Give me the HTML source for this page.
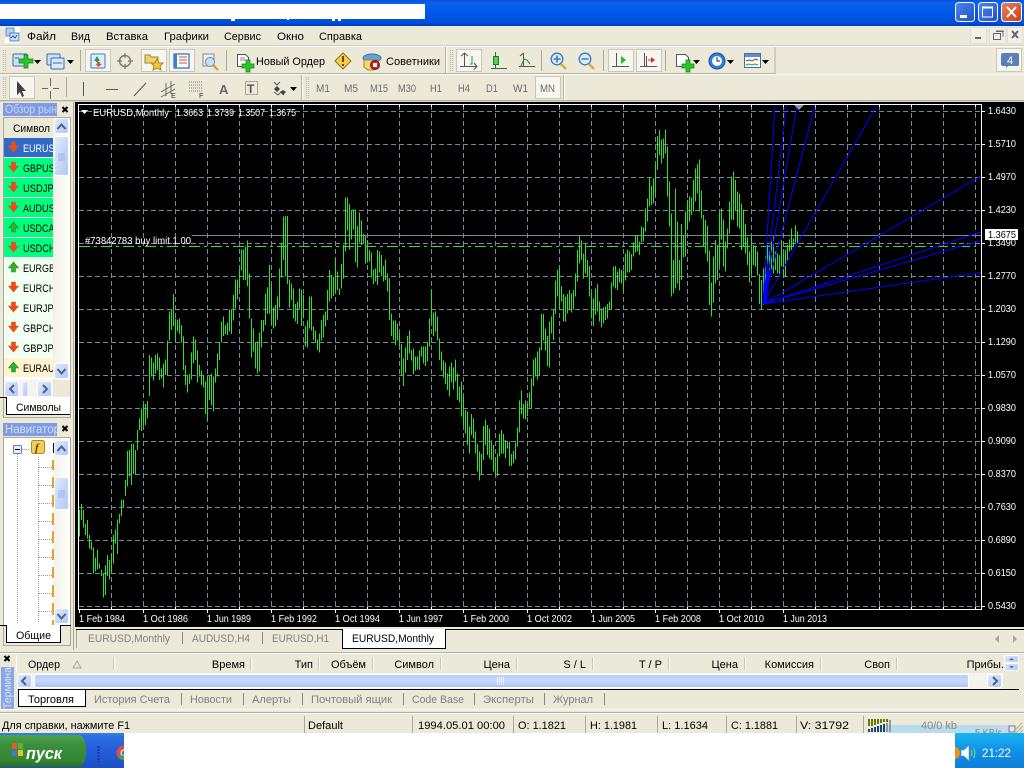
<!DOCTYPE html>
<html><head><meta charset="utf-8"><title>MT4</title>
<style>
html,body{margin:0;padding:0;background:#ece9d8;width:1024px;height:768px;overflow:hidden}
svg{display:block;position:absolute;left:0;top:0}
text{font-family:"Liberation Sans","DejaVu Sans",sans-serif;font-size:11px;fill:#000;white-space:pre}
.c text,text.c{font-size:10.5px;fill:#fff}
.g text,text.g{fill:#7f7f7f}
.tf{fill:#6c6c6c}
</style></head><body>
<svg width="1024" height="768" viewBox="0 0 1024 768" xmlns="http://www.w3.org/2000/svg">
<defs>
<linearGradient id="tb" x1="0" y1="0" x2="0" y2="1"><stop offset="0" stop-color="#0a54d8"/><stop offset=".12" stop-color="#0a62ee"/><stop offset=".5" stop-color="#0058e6"/><stop offset=".85" stop-color="#0050de"/><stop offset="1" stop-color="#003cb8"/></linearGradient>
<linearGradient id="wb" x1="0" y1="0" x2="1" y2="1"><stop offset="0" stop-color="#4f86ec"/><stop offset="1" stop-color="#1f4fc8"/></linearGradient>
<linearGradient id="wc" x1="0" y1="0" x2="1" y2="1"><stop offset="0" stop-color="#e8805e"/><stop offset="1" stop-color="#c8401c"/></linearGradient>
<linearGradient id="sb" x1="0" y1="0" x2="1" y2="1"><stop offset="0" stop-color="#e1eaff"/><stop offset="1" stop-color="#b0c6f8"/></linearGradient>
<linearGradient id="st" x1="0" y1="0" x2="1" y2="0"><stop offset="0" stop-color="#f3f2ea"/><stop offset="1" stop-color="#fefefb"/></linearGradient>
<linearGradient id="ht" x1="0" y1="0" x2="0" y2="1"><stop offset="0" stop-color="#b8cdfa"/><stop offset=".5" stop-color="#c8d8fd"/><stop offset="1" stop-color="#a9c1f6"/></linearGradient>
<linearGradient id="tk" x1="0" y1="0" x2="0" y2="1"><stop offset="0" stop-color="#3a80e8"/><stop offset=".1" stop-color="#2a6fe0"/><stop offset=".5" stop-color="#245edb"/><stop offset="1" stop-color="#1c50c4"/></linearGradient>
<linearGradient id="st2" x1="0" y1="0" x2="0" y2="1"><stop offset="0" stop-color="#4ea24e"/><stop offset=".3" stop-color="#3c8f3c"/><stop offset=".8" stop-color="#348534"/><stop offset="1" stop-color="#2a6c2a"/></linearGradient>
<linearGradient id="try" x1="0" y1="0" x2="0" y2="1"><stop offset="0" stop-color="#18b4f0"/><stop offset=".5" stop-color="#1290e9"/><stop offset="1" stop-color="#0f7fd8"/></linearGradient>
<g id="dn"><polygon points="-2,-5 2,-5 2,-1 5,-1 0,5 -5,-1 -2,-1" fill="#f04a18" stroke="#c85a30" stroke-width=".6"/></g>
<g id="up"><polygon points="-2,5 2,5 2,1 5,1 0,-5 -5,1 -2,1" fill="#30b030" stroke="#2a8a2a" stroke-width=".6"/></g>
<g id="sbtn"><rect x=".5" y=".5" width="14" height="15" rx="2" fill="url(#sb)" stroke="#fff"/></g>
<clipPath id="cl1"><rect x="0" y="118" width="53" height="262"/></clipPath>
<clipPath id="cl2"><rect x="0" y="437" width="54" height="188"/></clipPath>
</defs>

<!-- base -->
<rect width="1024" height="768" fill="#ece9d8"/>
<!-- title bar -->
<rect width="1024" height="26" fill="url(#tb)"/>
<rect x="0" y="4" width="425" height="15" fill="#fff"/>
<path d="M231 19h4v2h-4zM287 19h2v1h-2zM332 19h3v2h-3zM338 19h3v2h-3z" fill="#fff"/>
<g stroke="#fff">
<rect x="955.5" y="2.5" width="19" height="19" rx="3" fill="url(#wb)"/>
<rect x="978.5" y="2.5" width="19" height="19" rx="3" fill="url(#wb)"/>
<rect x="1001.5" y="2.5" width="20" height="19" rx="3" fill="url(#wc)"/>
</g>
<rect x="960" y="15" width="7" height="3" fill="#fff"/>
<rect x="982.5" y="7" width="10" height="10" fill="none" stroke="#fff"/><rect x="982" y="6.500" width="11" height="2" fill="#fff"/>
<path d="M1007 7l9 10M1016 7l-9 10" stroke="#fff" stroke-width="2" fill="none"/>

<!-- menu bar -->
<rect x="5" y="27" width="15" height="16" fill="#fff"/>
<rect x="6" y="28" width="8" height="8" fill="#b8d0f0" stroke="#3a70b8" stroke-width=".8"/><rect x="10" y="33" width="9" height="8" fill="#c8dcf8" stroke="#3a70b8" stroke-width=".8"/><path d="M11 38l2-2 2 2 2-3" stroke="#2a60a8" fill="none"/>
<g>
<text x="27" y="40" textLength="29" lengthAdjust="spacingAndGlyphs">Файл</text><text x="71" y="40" textLength="19" lengthAdjust="spacingAndGlyphs">Вид</text><text x="106" y="40" textLength="42" lengthAdjust="spacingAndGlyphs">Вставка</text><text x="164" y="40" textLength="45" lengthAdjust="spacingAndGlyphs">Графики</text><text x="224" y="40" textLength="37" lengthAdjust="spacingAndGlyphs">Сервис</text><text x="277" y="40" textLength="27" lengthAdjust="spacingAndGlyphs">Окно</text><text x="319" y="40" textLength="43" lengthAdjust="spacingAndGlyphs">Справка</text>
</g>
<rect y="45" width="1024" height="1" fill="#d0cebf"/><rect y="46" width="1024" height="1" fill="#fff"/>
<g fill="#f2f0e6" stroke="#e0ded0"><rect x="970.500" y="27.500" width="16" height="16"/><rect x="989.500" y="27.500" width="16" height="16"/><rect x="1007.500" y="27.500" width="15" height="16"/></g>
<rect x="975" y="37" width="6" height="2" fill="#666"/>
<path d="M993.500 33.500h7v6h-7zM996 31.500h7v5" fill="none" stroke="#666"/><path d="M993 33h8v1h-8zM996 30.500h8v1h-8z" fill="#666"/>
<path d="M1012 31l6 7M1018 31l-6 7" stroke="#666" stroke-width="2"/>

<!-- toolbars -->
<path d="M0 73.500H775M775 47V74" stroke="#b3b1a2" fill="none"/>
<path d="M0 74.500H1024" stroke="#fff"/>
<path d="M0 100.500H1024" stroke="#b3b1a2"/><path d="M0 101.500H1024" stroke="#d6d4c6"/>
<path d="M445.500 47V73M301.500 75V100M563.500 75V100" stroke="#b3b1a2"/>
<path d="M446.500 47V73M302.500 75V100M564.500 75V100" stroke="#fff"/>
<!-- grippers -->
<g stroke="#b9b7a8" stroke-dasharray="1 1"><path d="M3.500 50V71M5.500 50V71M3.500 77V98M5.500 77V98M450.500 50V71M452.500 50V71M306.500 77V98M308.500 77V98"/></g>
<!-- separators -->
<g stroke="#acaa9a"><path d="M80.500 50V71M226.500 50V71M541.500 50V71M603.500 50V71M665.500 50V71M66.500 77V97"/></g>
<!-- pressed -->
<g fill="#f6f5ef" stroke="#cac8b9">
<rect x="85.500" y="49.500" width="25" height="22"/><rect x="141.500" y="49.500" width="25" height="22"/><rect x="169.500" y="49.500" width="25" height="22"/><rect x="456.500" y="49.500" width="25" height="22"/><rect x="608.500" y="49.500" width="25" height="22"/><rect x="636.500" y="49.500" width="25" height="22"/><rect x="9.500" y="76.500" width="25" height="22"/><rect x="535.500" y="76.500" width="25" height="22"/>
</g>
<!-- row1 icons -->
<rect x="13" y="54" width="14" height="12" rx="1" fill="#cfe0f6" stroke="#3a6ca8"/><path d="M15 58h4M22 60h3" stroke="#3a6ca8"/>
<path d="M21 60h5v-4h4v4h5v4h-5v5h-4v-5h-5z" transform="translate(-2,-1) scale(1)" fill="#28c828" stroke="#1a7a1a" stroke-width=".7"/>
<path d="M34 60h7l-3.500 4z" fill="#000"/>
<rect x="47" y="54" width="13" height="11" rx="1" fill="#cfe0f6" stroke="#3a6ca8"/><rect x="51" y="58" width="13" height="11" rx="1" fill="#dbe8fa" stroke="#3a6ca8"/><path d="M53 63h9" stroke="#3a6ca8"/>
<path d="M67 60h7l-3.500 4z" fill="#000"/>
<rect x="91" y="54" width="14" height="14" rx="1" fill="#e4eefc" stroke="#3a78c0"/><path d="M94 61l3-5 3 5h-2v1h-2v-1z" fill="#18a848"/><path d="M97 62h3v2h2l-3.500 3-3-3h1.500z" fill="#e84a20"/>
<circle cx="125" cy="61" r="5.500" fill="none" stroke="#777" stroke-width="1.400"/><path d="M125 53v5M125 64v5M117 61h5M128 61h5" stroke="#777" stroke-width="1.200"/>
<path d="M145 55h5l1 2h7v6h-13z" fill="#f0d070" stroke="#a08830"/><polygon points="157,59 159,63 163,63 160,66 161,70 157,68 153,70 154,66 151,63 155,63" fill="#f4c838" stroke="#a88820"/>
<rect x="174" y="54" width="15" height="14" fill="#fff" stroke="#2a6cb8" stroke-width="1.200"/><rect x="174" y="54" width="3" height="14" fill="#3a80d0"/><path d="M179 57h8M179 60h8M179 63h8" stroke="#c05040"/>
<rect x="203" y="54" width="11" height="12" fill="#eaf0f8" stroke="#889"/><circle cx="210" cy="62" r="4.500" fill="#c8def2" stroke="#6a8aa8"/><path d="M213 65l5 5" stroke="#c8a030" stroke-width="2"/>
<path d="M237.500 54.500h8l3 3v9h-11z" fill="#fff" stroke="#555"/><path d="M240 58h5M240 60h6" stroke="#888"/>
<path d="M242 64h4v-4h4v4h4v4h-4v4h-4v-4h-4z" fill="#28c828" stroke="#1a7a1a" stroke-width=".7"/>
<text x="256" y="65" textLength="69" lengthAdjust="spacingAndGlyphs">Новый Ордер</text>
<polygon points="343,53 351,61 343,69 335,61" fill="#f4d040" stroke="#8a7430"/><rect x="342" y="56" width="2" height="6" fill="#804000"/><rect x="342" y="64" width="2" height="2" fill="#804000"/>
<ellipse cx="372" cy="58" rx="9" ry="4" fill="#68a0d8" stroke="#3a70a8"/><path d="M364 60h14v7l-5 3h-5l-4-3z" fill="#f4d870" stroke="#a08830"/><circle cx="375" cy="65" r="4.500" fill="#d02020" stroke="#801010"/><rect x="373" y="63" width="4" height="4" fill="#fff"/>
<text x="386" y="65" textLength="54" lengthAdjust="spacingAndGlyphs">Советники</text>
<!-- chart type icons -->
<g fill="none" stroke="#555">
<path d="M464.500 53V67M460 66.500H477M461 56l3.500-3 3.500 3M474 63l3 3.500-3 3"/>
<path d="M495.500 52V68M491 68.500H507" /><rect x="493.500" y="56.500" width="5" height="8" fill="#50d050" stroke="#208020"/>
<path d="M523.500 53V67M519 66.500H535M520 56l3.500-3"/></g>
<path d="M472 56v8h-2" stroke="#20a020" fill="none"/>
<path d="M521 66l3-7 3 1 3 4" stroke="#209020" fill="none"/>
<g fill="#d8ecfa" stroke="#3a78b8" stroke-width="1.300"><circle cx="557" cy="59" r="5.800"/><circle cx="585" cy="59" r="5.800"/></g>
<path d="M561 64l5 5M589 64l5 5" stroke="#d0b040" stroke-width="2.400"/>
<path d="M553.500 59h7M557 55.500v7M581.500 59h7" stroke="#3a78b8" stroke-width="1.600"/>
<g fill="none" stroke="#555"><path d="M616.500 53V67M612 66.500H629M644.500 53V67M640 66.500H657M646.500 56V66"/></g>
<polygon points="621,56 626,60 621,64" fill="#20c020"/><polygon points="655,60 651,57 651,63" fill="#d83020"/><path d="M652 60h-4" stroke="#d83020"/>
<path d="M676.500 54.500h9l3 3v9h-12z" fill="#fff" stroke="#555"/><path d="M682 64h4v-4h4v4h4v4h-4v4h-4v-4h-4z" fill="#28c828" stroke="#1a7a1a" stroke-width=".7"/><path d="M693 60h7l-3.500 4z" fill="#000"/>
<circle cx="717" cy="61" r="8" fill="#2a80e0" stroke="#1a50a0"/><circle cx="717" cy="61" r="5" fill="#fff"/><path d="M717 57v4h3" stroke="#222" fill="none"/><path d="M727 60h7l-3.500 4z" fill="#000"/>
<rect x="744.500" y="53.500" width="16" height="14" fill="#fff" stroke="#3a70b0"/><rect x="745" y="54" width="15" height="3" fill="#5a90d0"/><path d="M746 61l3-1 3 1 3-2 3 1" stroke="#a83020" fill="none"/><path d="M746 65l3-1 3 1 3-1 3 1" stroke="#20a040" fill="none"/><path d="M762 60h7l-3.500 4z" fill="#000"/>
<!-- "4" button -->
<rect x="996.500" y="48.500" width="25" height="23" fill="#f6f5ef" stroke="#cac8b9"/>
<path d="M1003 53h14a2 2 0 0 1 2 2v9a2 2 0 0 1-2 2h-9l-2 2v-2h-3a2 2 0 0 1-2-2v-9a2 2 0 0 1 2-2z" fill="#5d7fb8"/>
<text x="1007" y="64" style="fill:#fff;font-size:11px">4</text>
<!-- row2 icons -->
<path d="M17 81l0 14 3-3 2 5 2-1-2-5 4 0z" fill="#404040"/>
<path d="M50.500 79V87M50.500 92V100M42 89.500H48M53 89.500H59" stroke="#666" transform="translate(0,-1)"/>
<path d="M83.500 82V96" stroke="#555"/><path d="M106 89.500H118" stroke="#555"/><path d="M134 96L146 83" stroke="#555"/>
<path d="M161 92l14-8M161 97l14-8M166 83v13M171 81v13" stroke="#666" fill="none"/><text x="171" y="98" style="font-size:7px;font-weight:bold;fill:#666">E</text>
<path d="M189 82h14M189 85h14M189 88h14M189 91h14" stroke="#777" stroke-dasharray="1 1"/><text x="199" y="98" style="font-size:7px;font-weight:bold;fill:#666">F</text>
<text x="219" y="94" style="font-size:13px;font-weight:bold;fill:#666">A</text>
<rect x="245.500" y="81.500" width="12" height="13" fill="none" stroke="#666" stroke-dasharray="1 1"/><text x="247" y="93" style="font-size:12px;font-weight:bold;fill:#555">T</text>
<path d="M274 82l3 3 3-3M274 92l4 3 3-3 3 3" stroke="#555" fill="none"/><polygon points="277,86 280,89 277,92 274,89" fill="#444"/><polygon points="283,90 286,92 283,95 280,92" fill="#444"/><path d="M290 87h7l-3.500 4z" fill="#000"/>
<g class="tf"><text class="tf" x="316" y="92" textLength="14" lengthAdjust="spacingAndGlyphs">M1</text><text class="tf" x="344" y="92" textLength="14" lengthAdjust="spacingAndGlyphs">M5</text><text class="tf" x="370" y="92" textLength="18" lengthAdjust="spacingAndGlyphs">M15</text><text class="tf" x="398" y="92" textLength="18" lengthAdjust="spacingAndGlyphs">M30</text><text class="tf" x="430" y="92" textLength="12" lengthAdjust="spacingAndGlyphs">H1</text><text class="tf" x="458" y="92" textLength="12" lengthAdjust="spacingAndGlyphs">H4</text><text class="tf" x="486" y="92" textLength="12" lengthAdjust="spacingAndGlyphs">D1</text><text class="tf" x="513" y="92" textLength="15" lengthAdjust="spacingAndGlyphs">W1</text><text class="tf" x="540" y="92" textLength="15" lengthAdjust="spacingAndGlyphs">MN</text></g>

<!-- LEFT PANELS -->
<path d="M73.500 102V650" stroke="#aca899"/>
<rect x="3" y="103" width="54" height="13" fill="#7d9ce2"/>
<text x="5" y="113" style="fill:#c8d6f8;font-size:12px" textLength="52" lengthAdjust="spacingAndGlyphs">Обзор рын</text>
<path d="M62.500 107l5 5M67.500 107l-5 5" stroke="#000" stroke-width="2"/>
<rect x="3.500" y="117.500" width="67" height="280" fill="#fff" stroke="#aca899"/>
<rect x="4" y="118" width="49" height="20" fill="#ece9d8"/>
<text x="13" y="132" textLength="37" lengthAdjust="spacingAndGlyphs">Символ</text>
<g clip-path="url(#cl1)">
<rect x="4" y="138" width="49" height="19" fill="#316ac5"/>
<rect x="4" y="158" width="49" height="19" fill="#00ff7f"/><rect x="4" y="178" width="49" height="19" fill="#00ff7f"/><rect x="4" y="198" width="49" height="19" fill="#00ff7f"/><rect x="4" y="218" width="49" height="19" fill="#00ff7f"/><rect x="4" y="238" width="49" height="19" fill="#00ff7f"/>
<rect x="4" y="258" width="49" height="19" fill="#f0fff0"/><rect x="4" y="278" width="49" height="19" fill="#f0fff0"/><rect x="4" y="298" width="49" height="19" fill="#f0fff0"/><rect x="4" y="318" width="49" height="19" fill="#f0fff0"/><rect x="4" y="338" width="49" height="19" fill="#f0fff0"/>
<rect x="4" y="358" width="49" height="19" fill="#fff4cf"/>
<text x="23" y="152" style="fill:#fff" textLength="38" lengthAdjust="spacingAndGlyphs">EURUSD</text>
<text x="23" y="172" textLength="38" lengthAdjust="spacingAndGlyphs">GBPUSD</text><text x="23" y="192" textLength="37" lengthAdjust="spacingAndGlyphs">USDJPY</text><text x="23" y="212" textLength="38" lengthAdjust="spacingAndGlyphs">AUDUSD</text><text x="23" y="232" textLength="38" lengthAdjust="spacingAndGlyphs">USDCAD</text><text x="23" y="252" textLength="38" lengthAdjust="spacingAndGlyphs">USDCHF</text><text x="23" y="272" textLength="38" lengthAdjust="spacingAndGlyphs">EURGBP</text><text x="23" y="292" textLength="38" lengthAdjust="spacingAndGlyphs">EURCHF</text><text x="23" y="312" textLength="37" lengthAdjust="spacingAndGlyphs">EURJPY</text><text x="23" y="332" textLength="38" lengthAdjust="spacingAndGlyphs">GBPCHF</text><text x="23" y="352" textLength="37" lengthAdjust="spacingAndGlyphs">GBPJPY</text><text x="23" y="372" textLength="38" lengthAdjust="spacingAndGlyphs">EURAUD</text>
</g>
<use href="#dn" x="13.500" y="147"/><use href="#dn" x="13.500" y="167"/><use href="#dn" x="13.500" y="187"/><use href="#dn" x="13.500" y="207"/><use href="#up" x="13.500" y="227"/><use href="#dn" x="13.500" y="247"/><use href="#up" x="13.500" y="267"/><use href="#dn" x="13.500" y="287"/><use href="#dn" x="13.500" y="307"/><use href="#dn" x="13.500" y="327"/><use href="#dn" x="13.500" y="347"/><use href="#up" x="13.500" y="367"/>
<!-- scrollbar MW -->
<rect x="53" y="118" width="17" height="262" fill="url(#st)"/>
<use href="#sbtn" x="54" y="118"/><use href="#sbtn" x="54" y="363"/>
<rect x="54.500" y="136.500" width="14" height="39" rx="2" fill="url(#sb)" stroke="#fff"/>
<path d="M58 156h7M58 158h7M58 160h7M58 154h7" stroke="#9cb2e0"/>
<path d="M57.500 129l4-4.500 4 4.500M57.500 369l4 4.500 4-4.500" fill="none" stroke="#4d6185" stroke-width="2"/>
<!-- h scroll MW -->
<rect x="4" y="380" width="66" height="17" fill="#f4f3ec"/>
<rect x="4.500" y="381.500" width="14" height="15" rx="2" fill="url(#sb)" stroke="#fff"/><rect x="22" y="381.500" width="6" height="15" rx="2" fill="url(#sb)" stroke="#fff"/><rect x="37.500" y="381.500" width="14" height="15" rx="2" fill="url(#sb)" stroke="#fff"/>
<path d="M14 385l-4 4 4 4M43 385l4 4-4 4" fill="none" stroke="#4d6185" stroke-width="2"/>
<rect x="53" y="380" width="17" height="17" fill="#ece9d8"/>
<path d="M0 397.500H6" stroke="#000"/>
<rect x="6" y="397" width="64" height="17" fill="#fff"/>
<path d="M6.500 397V414.500H70" fill="none" stroke="#000" stroke-width="1"/>
<text x="16" y="411" textLength="45" lengthAdjust="spacingAndGlyphs">Символы</text>
<path d="M3.500 398V417.500H70.500V398" fill="none" stroke="#aca899"/>

<!-- navigator -->
<rect x="3" y="423" width="54" height="13" fill="#7d9ce2"/>
<text x="5" y="433" style="fill:#d4dff9;font-size:12px" textLength="55" lengthAdjust="spacingAndGlyphs">Навигатор</text>
<rect x="57" y="423" width="16" height="13" fill="#ece9d8"/>
<path d="M62.500 426l5 5M67.500 426l-5 5" stroke="#000" stroke-width="2"/>
<rect x="3.500" y="437.500" width="67" height="188" fill="#fff" stroke="#aca899"/>
<g stroke="#999" stroke-dasharray="1 1" fill="none">
<path d="M17.500 454V624M38.500 457V622M20 449.500H30"/>
<path d="M39 467.500H52M39 485.500H52M39 503.500H52M39 521.500H52M39 539.500H52M39 557.500H52M39 575.500H52M39 593.500H52M39 611.500H52"/>
</g>
<rect x="13.500" y="445.500" width="8" height="8" rx="1" fill="#e8ecf8" stroke="#6a80a0"/><path d="M15 449.500h5" stroke="#000"/>
<rect x="31.500" y="440.500" width="13" height="13" rx="2" fill="#f4cc58" stroke="#b08820"/><text x="35" y="451" style="font-family:'Liberation Serif',serif;font-style:italic;font-weight:bold;font-size:11px;fill:#604010">f</text>
<rect x="53" y="443" width="1" height="10" fill="#000"/>
<g fill="#e0a428"><rect x="52" y="460" width="2" height="10"/><rect x="52" y="477" width="2" height="11"/><rect x="52" y="495" width="2" height="12"/><rect x="52" y="513" width="2" height="12"/><rect x="52" y="531" width="2" height="12"/><rect x="52" y="549" width="2" height="11"/><rect x="52" y="567" width="2" height="11"/><rect x="52" y="585" width="2" height="12"/><rect x="52" y="603" width="2" height="12"/><rect x="52" y="620" width="2" height="5"/></g>
<rect x="54" y="438" width="16" height="187" fill="url(#st)"/>
<rect x="54.500" y="440.500" width="14" height="15" rx="2" fill="url(#sb)" stroke="#fff"/><rect x="54.500" y="477.500" width="14" height="32" rx="2" fill="url(#sb)" stroke="#fff"/><rect x="54.500" y="608.500" width="14" height="15" rx="2" fill="url(#sb)" stroke="#fff"/>
<path d="M58 491h7M58 493h7M58 495h7M58 497h7" stroke="#9cb2e0"/>
<path d="M57.500 451l4-4.500 4 4.500M57.500 614l4 4.500 4-4.500" fill="none" stroke="#4d6185" stroke-width="2"/>
<rect x="6" y="625" width="55" height="17" fill="#fff"/>
<path d="M6.500 625V642.500H60.500V625" fill="none" stroke="#000"/>
<path d="M0 625.500H6M61 625.500H71" stroke="#000"/>
<text x="16" y="639" textLength="35" lengthAdjust="spacingAndGlyphs">Общие</text>
<path d="M3.500 626V645.500H70.500V626" fill="none" stroke="#aca899"/>

<!-- CHART -->
<rect x="75" y="102" width="949" height="525" fill="#000"/>
<path d="M78.500 104.500H981.500V609.500H78.500z" fill="none" stroke="#fff"/>
<!-- grid -->
<g stroke="#778899" stroke-dasharray="5 3" fill="none">
<path d="M79 111.500H981M79 144.500H981M79 177.500H981M79 210.500H981M79 243.500H981M79 276.500H981M79 309.500H981M79 342.500H981M79 375.500H981M79 408.500H981M79 441.500H981M79 474.500H981M79 507.500H981M79 540.500H981M79 573.500H981M79 606.500H981"/>
<path d="M111.500 105V609M143.500 105V609M175.500 105V609M207.500 105V609M239.500 105V609M271.500 105V609M303.500 105V609M335.500 105V609M367.500 105V609M399.500 105V609M431.500 105V609M463.500 105V609M495.500 105V609M527.500 105V609M559.500 105V609M591.500 105V609M623.500 105V609M655.500 105V609M687.500 105V609M719.500 105V609M751.500 105V609M783.500 105V609M815.500 105V609M847.500 105V609M879.500 105V609M911.500 105V609M943.500 105V609M975.500 105V609"/>
</g>
<!-- axis ticks -->
<g stroke="#fff">
<path d="M79.500 610V613M143.500 610V613M207.500 610V613M271.500 610V613M335.500 610V613M399.500 610V613M463.500 610V613M527.500 610V613M591.500 610V613M655.500 610V613M719.500 610V613M783.500 610V613"/>
<path d="M111.500 607V609M175.500 607V609M239.500 607V609M303.500 607V609M367.500 607V609M431.500 607V609M495.500 607V609M559.500 607V609M623.500 607V609M687.500 607V609M751.500 607V609M815.500 607V609M847.500 607V609M879.500 607V609M911.500 607V609M943.500 607V609M975.500 607V609"/>
<path d="M111.500 105V107M143.500 105V107M175.500 105V107M207.500 105V107M239.500 105V107M271.500 105V107M303.500 105V107M335.500 105V107M367.500 105V107M399.500 105V107M431.500 105V107M463.500 105V107M495.500 105V107M527.500 105V107M559.500 105V107M591.500 105V107M623.500 105V107M655.500 105V107M687.500 105V107M719.500 105V107M751.500 105V107M783.500 105V107M815.500 105V107M847.500 105V107M879.500 105V107M911.500 105V107M943.500 105V107M975.500 105V107"/>
<path d="M982 111.500h3M982 144.500h3M982 177.500h3M982 210.500h3M982 243.500h3M982 276.500h3M982 309.500h3M982 342.500h3M982 375.500h3M982 408.500h3M982 441.500h3M982 474.500h3M982 507.500h3M982 540.500h3M982 573.500h3M982 606.500h3"/>
</g>
<!-- lines -->
<path d="M192 235.500H981" stroke="#778899"/>
<path d="M79 246.500H976" stroke="#2fe02f" stroke-dasharray="11 4 3 4"/>
<!-- bars -->
<g stroke="#2fe02f" stroke-width="3" fill="none" shape-rendering="crispEdges">
<path transform="translate(78.170,420) scale(.33333)" d="M4 270V350M10 252V300M16 270V322M22 312V345M28 300V355M34 345V385M40 365V390M46 382V460M52 412V455M58 388V448M64 430V445M70 450V468M76 460V532M82 435V525M88 405V468M94 420V478M100 402V460M106 345V430M112 328V370M118 298V402M124 282V310M130 240V288M136 238V262M142 180V228M148 93V200M154 90V170M160 72V195M166 72V162M172 90V162M178 30V90"/>
<path transform="translate(78.170,200) scale(.33333)" d="M184 655V690M190 625V693M196 612V675M202 612V675M208 603V655M214 465V588M220 472V530M226 488V542M232 465V520M238 460V510M244 472V540M250 505V535M256 490V562M262 478V525M268 422V525M274 335V422M280 328V390M286 282V378M292 355V425M298 358V395M304 355V402M310 375V428M316 410V510M322 495V555M328 525V578M334 522V552M340 458V538M346 410V490M352 418V480M358 452V548M364 495V530M370 512V555M376 525V562M382 545V642M388 528V660M394 528V600M400 520V615M406 530V635M412 505V548M418 460V530M424 428V480M430 365V428M436 350V408M442 375V402M448 368V405M454 328V395M460 328V402M466 285V362M472 238V325M478 238V298M484 208V265M490 148V212M496 148V240M502 140V240M508 122V258M514 220V355M520 355V472M526 385V455M532 428V505M538 425V520M544 398V515M550 360V442M556 360V395M562 280V375M568 262V342M574 195V340M580 252V372M586 322V385M592 315V380M598 290V358M604 205V322M610 130V232M616 50V180M622 48V230M628 48V252M634 238V322M640 250V300M646 265V355M652 312V365M658 305V372M664 265V325M670 268V378M676 285V355M682 378V440M688 362V442M694 290V385M700 290V392M706 380V420M712 392V428M718 418V450M724 400V458M730 360V422M736 345V412M742 335V380M748 270V360M754 210V305M760 225V295M766 230V288M772 175V278M778 215V270M784 265V285"/>
<path transform="translate(340.170,190) scale(.33333)" d="M4 222V296M10 165V265M16 22V185M22 22V122M28 42V178M34 62V148M40 58V118M46 58V218M52 108V232M58 68V158M64 92V165M70 132V160M76 135V220M82 150V218M88 180V215M94 188V262M100 238V282M106 235V275M112 180V285M118 185V248M124 195V258M130 228V275M136 208V270M142 250V305M148 265V390M154 370V438M160 392V450M166 392V465M172 400V452M178 428V470M184 462V555M190 505V588M196 472V548M202 438V510M208 422V490M214 480V512M220 475V552M226 500V542M232 500V538M238 482V540M244 470V500M250 470V520M256 470V528M262 458V515M268 385V470M274 300V398M280 368V438M286 365V425M292 380V452M298 445V510M304 485V542M310 512V562M316 518V582M322 550V600M328 530V620M334 518V578M340 532V598M346 508V575M352 550V630M358 590V638M364 575V680M370 618V705M376 660V730M382 665V765M388 710V790M394 672V735M400 685V745M406 725V790M412 762V845M418 785V872M424 792V855M430 708V810M436 688V765M442 705V795M448 715V805M454 752V810M460 765V845M466 805V855M472 790V858M478 732V800M484 720V792M490 732V790M496 750V805M502 755V775M508 755V828M514 792V828M520 783V820M526 758V808M532 712V770M538 632V728M544 602V672M550 642V685M556 632V688M562 640V678M568 608V652M574 565V655M580 508V588M586 502V560M592 485V568M598 472V558M604 372V480M610 372V452M616 415V482M622 438V528M628 395V532M634 380V430M640 360V450M646 272V372M652 240V320M658 232V358M664 288V335M670 312V395M676 320V395M682 312V370M688 300V360M694 310V368M700 300V358"/>
<path transform="translate(560.170,120) scale(.33333)" d="M46 460V530M52 390V485M58 348V430M64 362V420M70 400V475M76 372V460M82 420V470M88 438V530M94 520V595M100 535V618M106 505V585M112 492V575M118 545V605M124 565V622M130 562V610M136 560V600M142 552V595M148 545V570M154 487V568M160 440V500M166 438V505M172 455V510M178 445V488M184 450V490M190 452V518M196 400V482M202 388V458M208 395V458M214 402V450M220 368V410M226 345V398M232 345V395M238 365V405M244 320V368M250 322V365M256 265V335M262 235V305M268 172V260M274 198V255M280 175V250M286 132V225M292 48V150M298 30V105M304 58V130M310 55V115M316 28V100M322 80V230M328 185V320M334 280V530M340 420V520M346 205V505M352 305V490M358 420V512M364 312V480M370 345V412M376 275V410M382 240V330M388 230V305M394 232V285M400 180V275M406 145V245M412 132V220M418 118V275M424 212V295M430 285V380M436 300V400M442 318V425M448 392V555M454 488V590M460 410V548M466 360V490M472 375V480M478 275V440M484 265V358M490 298V440M496 365V455M502 325V385M508 245V340M514 170V298M520 155V300M526 180V270M532 215V320M538 220V325M544 250V390M550 268V380M556 312V400M562 352V435M568 395V488M574 348V460M580 375V435M586 378V440M592 395V465M598 462V552M604 480V568M610 445V555M616 408V490M622 375V430M628 375V460M634 365V450M640 350V460M646 395V450M652 400V460M658 405V465M664 360V440M670 400V470M676 390V470M682 375V420M688 358V395M694 325V390M700 355V380M706 315V368M712 335V370"/>
</g>
<!-- fan -->
<g stroke="#0000ff" fill="none" shape-rendering="crispEdges">
<path d="M763 304L981 272.500M763 304L981 240.500M763 304L981 232M763 304L981 176M763 304L877 105M763 304L815 105M763 304L797 105M763 304L786.500 105M763 304L775 105"/>
<path d="M765 303L769 270" stroke-width="3"/>
</g>
<polygon points="794,105 804,105 799,110" fill="#8b96a6"/>
<!-- chart text -->
<polygon points="81,110 88,110 84.500,114" fill="#fff"/>
<g class="c">
<text x="93" y="116" textLength="76" lengthAdjust="spacingAndGlyphs">EURUSD,Monthly</text>
<text x="176" y="116" textLength="27" lengthAdjust="spacingAndGlyphs">1.3663</text><text x="207" y="116" textLength="27" lengthAdjust="spacingAndGlyphs">1.3739</text><text x="238" y="116" textLength="27" lengthAdjust="spacingAndGlyphs">1.3507</text><text x="269" y="116" textLength="27" lengthAdjust="spacingAndGlyphs">1.3675</text>
<text x="85" y="244" textLength="106" lengthAdjust="spacingAndGlyphs">#73842783 buy limit 1.00</text>
<text x="988" y="114" textLength="28" lengthAdjust="spacingAndGlyphs">1.6430</text><text x="988" y="147" textLength="28" lengthAdjust="spacingAndGlyphs">1.5710</text><text x="988" y="180" textLength="28" lengthAdjust="spacingAndGlyphs">1.4970</text><text x="988" y="213" textLength="28" lengthAdjust="spacingAndGlyphs">1.4230</text><text x="988" y="246" textLength="28" lengthAdjust="spacingAndGlyphs">1.3490</text><text x="988" y="279" textLength="28" lengthAdjust="spacingAndGlyphs">1.2770</text><text x="988" y="312" textLength="28" lengthAdjust="spacingAndGlyphs">1.2030</text><text x="988" y="345" textLength="28" lengthAdjust="spacingAndGlyphs">1.1290</text><text x="988" y="378" textLength="28" lengthAdjust="spacingAndGlyphs">1.0570</text><text x="988" y="411" textLength="28" lengthAdjust="spacingAndGlyphs">0.9830</text><text x="988" y="444" textLength="28" lengthAdjust="spacingAndGlyphs">0.9090</text><text x="988" y="477" textLength="28" lengthAdjust="spacingAndGlyphs">0.8370</text><text x="988" y="510" textLength="28" lengthAdjust="spacingAndGlyphs">0.7630</text><text x="988" y="543" textLength="28" lengthAdjust="spacingAndGlyphs">0.6890</text><text x="988" y="576" textLength="28" lengthAdjust="spacingAndGlyphs">0.6150</text><text x="988" y="609" textLength="28" lengthAdjust="spacingAndGlyphs">0.5430</text>
<text x="79" y="622" textLength="46" lengthAdjust="spacingAndGlyphs">1 Feb 1984</text><text x="143" y="622" textLength="45" lengthAdjust="spacingAndGlyphs">1 Oct 1986</text><text x="207" y="622" textLength="44" lengthAdjust="spacingAndGlyphs">1 Jun 1989</text><text x="271" y="622" textLength="46" lengthAdjust="spacingAndGlyphs">1 Feb 1992</text><text x="335" y="622" textLength="45" lengthAdjust="spacingAndGlyphs">1 Oct 1994</text><text x="399" y="622" textLength="44" lengthAdjust="spacingAndGlyphs">1 Jun 1997</text><text x="463" y="622" textLength="46" lengthAdjust="spacingAndGlyphs">1 Feb 2000</text><text x="527" y="622" textLength="45" lengthAdjust="spacingAndGlyphs">1 Oct 2002</text><text x="591" y="622" textLength="44" lengthAdjust="spacingAndGlyphs">1 Jun 2005</text><text x="655" y="622" textLength="46" lengthAdjust="spacingAndGlyphs">1 Feb 2008</text><text x="719" y="622" textLength="45" lengthAdjust="spacingAndGlyphs">1 Oct 2010</text><text x="783" y="622" textLength="44" lengthAdjust="spacingAndGlyphs">1 Jun 2013</text>
</g>
<rect x="985" y="229" width="33" height="11" fill="#fff"/>
<text x="988" y="238" textLength="28" lengthAdjust="spacingAndGlyphs" style="font-size:10.5px">1.3675</text>

<!-- chart tabs -->
<rect x="75" y="627" width="949" height="2" fill="#ece9d8"/>
<rect x="76" y="629" width="948" height="1" fill="#000"/>
<rect x="76" y="630" width="948" height="19" fill="#ece9d8"/>
<rect x="343" y="629" width="102" height="19" fill="#fff"/>
<path d="M342.500 630V648.500H445.500V630" fill="none" stroke="#000"/>
<path d="M76.500 630V648" stroke="#aca899"/>
<g class="g"><text class="g" x="88" y="642" textLength="82" lengthAdjust="spacingAndGlyphs">EURUSD,Monthly</text><text class="g" x="192" y="642" textLength="58" lengthAdjust="spacingAndGlyphs">AUDUSD,H4</text><text class="g" x="272" y="642" textLength="57" lengthAdjust="spacingAndGlyphs">EURUSD,H1</text></g>
<text x="352" y="642" textLength="82" lengthAdjust="spacingAndGlyphs">EURUSD,Monthly</text>
<path d="M182.500 632V644M262.500 632V644" stroke="#888"/>
<polygon points="999,635 999,643 995,639" fill="#a8a698"/><polygon points="1013,635 1013,643 1017,639" fill="#a8a698"/>

<!-- terminal -->
<path d="M0 652.500H1024" stroke="#b3b1a2"/><path d="M0 653.500H1024" stroke="#fff"/>
<path d="M4.500 656l5 5M9.500 656l-5 5" stroke="#000" stroke-width="2"/>
<rect x="1" y="667" width="13" height="43" fill="#8aa6e6"/>
<text transform="translate(11,709) rotate(-90)" style="fill:#dbe5fb;font-size:11px" textLength="42" lengthAdjust="spacingAndGlyphs">Термина</text>
<rect x="16" y="655" width="1" height="17" fill="#fff"/>
<g>
<text x="28" y="668" textLength="32" lengthAdjust="spacingAndGlyphs">Ордер</text>
<polygon points="77,661 81,668 73,668" fill="none" stroke="#aca899"/>
<text x="245" y="668" text-anchor="end">Время</text><text x="313" y="668" text-anchor="end">Тип</text><text x="366" y="668" text-anchor="end">Объём</text><text x="434" y="668" text-anchor="end">Символ</text><text x="510" y="668" text-anchor="end">Цена</text><text x="586" y="668" text-anchor="end">S / L</text><text x="662" y="668" text-anchor="end">T / P</text><text x="738" y="668" text-anchor="end">Цена</text><text x="814" y="668" text-anchor="end">Комиссия</text><text x="890" y="668" text-anchor="end">Своп</text><text x="1004" y="668" text-anchor="end">Прибы.</text>
</g>
<path d="M113.500 657V670M250.500 657V670M318.500 657V670M372.500 657V670M440.500 657V670M516.500 657V670M592.500 657V670M668.500 657V670M744.500 657V670M820.500 657V670M896.500 657V670" stroke="#c8c6b6"/>
<path d="M114.500 657V670M251.500 657V670M319.500 657V670M373.500 657V670M441.500 657V670M517.500 657V670M593.500 657V670M669.500 657V670M745.500 657V670M821.500 657V670M897.500 657V670" stroke="#fff"/>
<rect x="1004.500" y="655.500" width="14" height="7" rx="1" fill="url(#sb)" stroke="#fff"/><rect x="1004.500" y="663.500" width="14" height="7" rx="1" fill="url(#sb)" stroke="#fff"/>
<path d="M1009 660h5l-2.500-2zM1009 666h5l-2.500 2z" fill="#4d6185"/>
<rect x="17" y="673" width="986" height="16" fill="#f4f3ec"/>
<rect x="17.500" y="674.500" width="14" height="13" rx="2" fill="url(#sb)" stroke="#fff"/>
<rect x="34.500" y="674.500" width="934" height="13" rx="2" fill="url(#ht)" stroke="#fff"/>
<rect x="987.500" y="674.500" width="14" height="13" rx="2" fill="url(#sb)" stroke="#fff"/>
<path d="M26 677l-4 4 4 4M993 677l4 4-4 4" fill="none" stroke="#4d6185" stroke-width="2"/>
<path d="M497.500 677V685M499.500 677V685M501.500 677V685M503.500 677V685" stroke="#eef2fd"/>
<rect x="85" y="689" width="934" height="1" fill="#000"/>
<rect x="18" y="689" width="67" height="18" fill="#fff"/>
<path d="M18.500 689V706.500H85.500V689M18 689.500H85" fill="none" stroke="#000"/>
<text x="28" y="703" textLength="46" lengthAdjust="spacingAndGlyphs">Торговля</text>
<g>
<text class="g" x="94" y="703" textLength="76" lengthAdjust="spacingAndGlyphs">История Счета</text><text class="g" x="190" y="703" textLength="42" lengthAdjust="spacingAndGlyphs">Новости</text><text class="g" x="252" y="703" textLength="39" lengthAdjust="spacingAndGlyphs">Алерты</text><text class="g" x="311" y="703" textLength="81" lengthAdjust="spacingAndGlyphs">Почтовый ящик</text><text class="g" x="412" y="703" textLength="52" lengthAdjust="spacingAndGlyphs">Code Base</text><text class="g" x="483" y="703" textLength="51" lengthAdjust="spacingAndGlyphs">Эксперты</text><text class="g" x="553" y="703" textLength="40" lengthAdjust="spacingAndGlyphs">Журнал</text>
</g>
<path d="M181.500 693V705M243.500 693V705M302.500 693V705M403.500 693V705M474.500 693V705M544.500 693V705M604.500 693V705" stroke="#888"/>
<path d="M0 709.500H1024" stroke="#fff"/><path d="M0 712.500H1024" stroke="#b3b1a2"/><path d="M0 713.500H1024" stroke="#fff"/>

<!-- status bar -->
<text x="2" y="729" textLength="128" lengthAdjust="spacingAndGlyphs">Для справки, нажмите F1</text>
<text x="308" y="729" textLength="35" lengthAdjust="spacingAndGlyphs">Default</text>
<text x="418" y="729" textLength="87" lengthAdjust="spacingAndGlyphs">1994.05.01 00:00</text>
<text x="518" y="729" textLength="48" lengthAdjust="spacingAndGlyphs">O: 1.1821</text>
<text x="590" y="729" textLength="47" lengthAdjust="spacingAndGlyphs">H: 1.1981</text>
<text x="662" y="729" textLength="46" lengthAdjust="spacingAndGlyphs">L: 1.1634</text>
<text x="731" y="729" textLength="47" lengthAdjust="spacingAndGlyphs">C: 1.1881</text>
<text x="800" y="729" textLength="49" lengthAdjust="spacingAndGlyphs">V: 31792</text>
<path d="M304.500 716V733M412.500 716V733M513.500 716V733M585.500 716V733M657.500 716V733M726.500 716V733M796.500 716V733M863.500 716V733" stroke="#aca899"/>
<rect x="888" y="725" width="110" height="8" fill="#b9dcec"/>
<rect x="998" y="725" width="12" height="8" fill="#c8d8e8"/>
<path d="M868 719h2v7h-2zM871 719h2v7h-2zM874 719h2v6h-2zM877 719h2v5h-2zM880 719h2v4h-2zM883 719h2v3h-2zM886 719h2v3h-2z" fill="#6a7a00"/>
<path d="M868 729h2v3h-2zM871 728h2v4h-2zM874 727h2v5h-2zM877 726h2v6h-2zM880 725h2v7h-2zM883 724h2v8h-2z" fill="#104a7a"/><path d="M886 723h2v9h-2zM889 720h2v12h-2z" fill="#8a9ca8"/>
<text x="921" y="729" textLength="36" lengthAdjust="spacingAndGlyphs" style="fill:#888">40/0 kb</text>
<text x="975" y="736" style="fill:#888;font-size:10px" textLength="27" lengthAdjust="spacingAndGlyphs">5 KB/s</text>
<rect x="1009" y="726" width="6" height="6" fill="none" stroke="#6a84a0"/>
<path d="M1012 733l10-10M1016 733l7-7M1020 733l3-3" stroke="#b0aea0"/>

<!-- taskbar -->
<rect x="0" y="733" width="1024" height="35" fill="url(#tk)"/>
<path d="M0 735H78q8 0 8 16t-8 16H0z" fill="url(#st2)"/>
<rect x="12" y="743" width="5" height="6" fill="#e8582a"/><rect x="18" y="743" width="5" height="6" fill="#58b038"/><rect x="12" y="750" width="5" height="6" fill="#3a78e0"/><rect x="18" y="750" width="5" height="6" fill="#f4c020"/>
<text x="26" y="759" style="fill:#fff;font-size:17px;font-weight:bold;font-style:italic" textLength="36" lengthAdjust="spacingAndGlyphs">пуск</text>
<path d="M98.500 746V762" stroke="#0f3a9a" stroke-width="2" stroke-dasharray="2 1"/>
<circle cx="124" cy="753" r="7.500" fill="#e84a3a"/><circle cx="124" cy="753" r="3" fill="#3a80e8" stroke="#fff"/><path d="M124 760a7 7 0 0 1-6-4l3-1 3 1z" fill="#38a848"/>
<rect x="955" y="733" width="69" height="35" fill="url(#try)"/>
<rect x="124" y="733" width="831" height="35" fill="#fff"/>
<path d="M955 747a5 6 0 0 1 0 12z" fill="#f09018"/>
<path d="M961 750h3l5-5v16l-5-5h-3z" fill="#fff" stroke="#5a8ab8" stroke-width=".6"/>
<path d="M971 750q2 3 0 6M973.500 748q3 5 0 10" stroke="#80e060" fill="none"/>
<text x="982" y="757" style="fill:#fff;font-size:12px" textLength="29" lengthAdjust="spacingAndGlyphs">21:22</text>
</svg>
</body></html>
